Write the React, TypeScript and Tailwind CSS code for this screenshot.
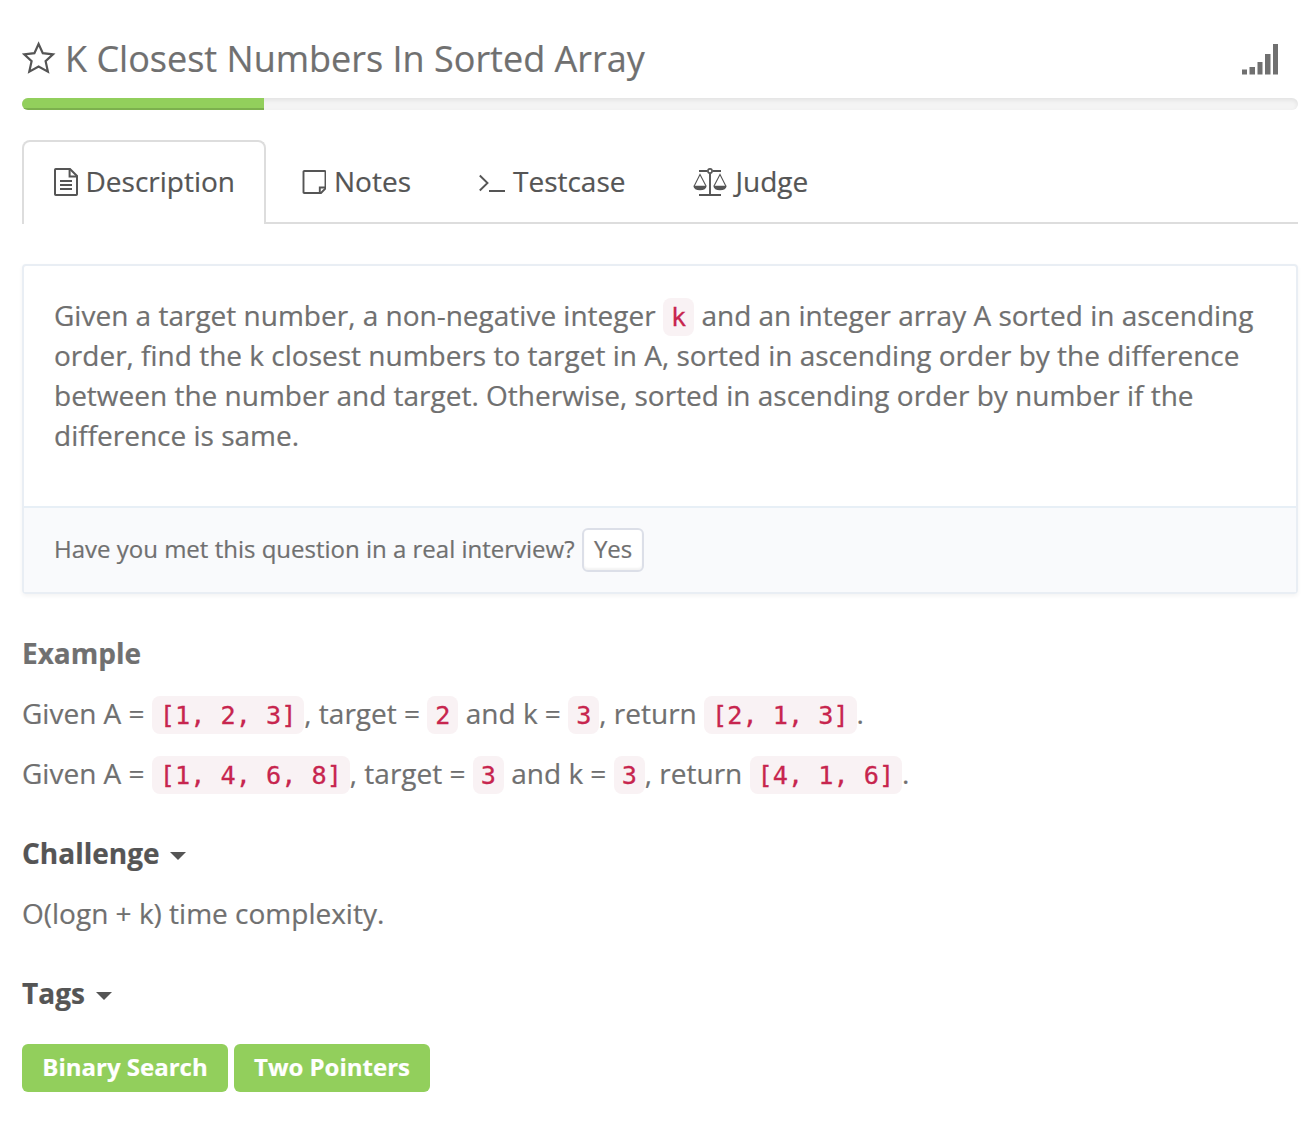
import type { ReactNode } from "react";

function Code({ children }: { children: ReactNode }) {
  return (
    <code className="rounded-lg bg-[#f9f2f4] px-2 pb-1 pt-[5px] font-['DejaVu_Sans_Mono',monospace] text-[25.2px] leading-[30px] text-[#c7254e] [-webkit-text-stroke:0.3px_#c7254e]">
      {children}
    </code>
  );
}

function StarIcon() {
  return (
    <svg className="-mt-[5px] h-[34px] w-[34px] shrink-0" viewBox="0 0 34 34" fill="none" stroke="#555" strokeWidth="2.2">
      <path d="M16.6 4 L20.8 13.2 L31 14.4 L23.6 21.2 L25.9 31.6 L16.6 26.6 L7.3 31.6 L9.6 21.2 L2.2 14.4 L12.4 13.2 Z" />
    </svg>
  );
}

function SignalIcon() {
  return (
    <svg className="h-8 w-9" viewBox="0 0 36 32" fill="#707070">
      <path d="M0 26.5h5v5h-5zM7.5 24h5.5v7.5h-5.5zM15.5 19h5v12.5h-5zM23 11h5.5v20.5h-5.5zM31 1h5v30.5h-5z" />
    </svg>
  );
}

function DocumentIcon() {
  return (
    <svg className="mt-0.5 h-7 w-6" viewBox="0 0 24 28" fill="none" stroke="#555" strokeWidth="2">
      <path d="M16 1H1.8Q1 1 1 1.8V26.2Q1 27 1.8 27H22.2Q23 27 23 26.2V8Z" />
      <path d="M15.6 1V8.6H23" />
      <path d="M6 13h12M6 17h12M6 21h12" strokeWidth="1.8" />
    </svg>
  );
}

function NoteIcon() {
  return (
    <svg className="mt-0.5 h-7 w-6" viewBox="0 0 24 28" fill="none" stroke="#555" strokeWidth="1.9">
      <path d="M2.3 3H22.7Q23.5 3 23.5 3.8V20.5L19 25H2.3Q1.5 25 1.5 24.2V3.8Q1.5 3 2.3 3Z" />
      <path d="M17.8 25V19.5H23.5" />
    </svg>
  );
}

function TerminalIcon() {
  return (
    <svg className="h-7 w-[26px]" viewBox="0 0 26 28" fill="none" stroke="#555" strokeWidth="1.9">
      <path d="M.8 8.5L8.5 16L.8 23.5M10 24H26" />
    </svg>
  );
}

function ScaleIcon() {
  return (
    <svg className="-ml-px mr-px mt-0.5 h-7 w-[34px]" viewBox="0 0 34 28" fill="none" stroke="#555" strokeWidth="1.9">
      <path d="M6 3H14.5M19.5 3H28M17 5.5V27M6 27H28" />
      <circle cx="17" cy="3" r="2.1" strokeWidth="1.6" />
      <path d="M1.2 18L7 6.5L13 18M21 18L27 6.5L32.8 18" strokeWidth="1.1" />
      <path d="M.3 17.8H13.7Q13 22.3 7 22.3T.3 17.8ZM20.3 17.8H33.7Q33 22.3 27 22.3T20.3 17.8Z" fill="#555" stroke="none" />
    </svg>
  );
}

function Tab({ icon, label, active = false }: { icon: ReactNode; label: string; active?: boolean }) {
  return (
    <button
      className={
        active
          ? "-mb-0.5 mr-1 flex h-[84px] w-[244px] items-center gap-[7.5px] whitespace-nowrap rounded-t-lg border-2 border-b-0 border-[#ddd] bg-white pb-1 pl-[30px]"
          : "mr-1 flex h-[82px] items-center gap-[8px] border-2 border-b-0 border-transparent px-[30px] pb-0.5"
      }
    >
      {icon}
      <span className="leading-10">{label}</span>
    </button>
  );
}

function Caret() {
  return <span className="mt-[5px] border-x-8 border-t-8 border-x-transparent border-t-[#555]" />;
}

export default function App() {
  return (
    <main className="h-[1124px] w-[1316px] overflow-hidden bg-white px-[22px] pr-[18px] pt-[34px] font-['Open_Sans',sans-serif] text-[28px] leading-10 text-[#707070] [-webkit-text-stroke:0.2px_currentColor]">
      <header className="flex h-[50px] items-center">
        <StarIcon />
        <h1 className="ml-[9px] text-[36px] leading-[50px]">K Closest Numbers In Sorted Array</h1>
        <div className="ml-auto mr-5">
          <SignalIcon />
        </div>
      </header>

      <div className="mt-[14px] h-3 overflow-hidden rounded-md bg-[#f4f4f4] shadow-[inset_0_2px_4px_rgba(0,0,0,0.08)]">
        <div className="h-full w-[242px] bg-[#92cf5c] shadow-[inset_0_-2px_0_rgba(0,0,0,0.15)]" />
      </div>

      <nav className="mt-[30px] flex h-[84px] border-b-2 border-[#ddd] text-[#555]">
        <Tab active icon={<DocumentIcon />} label="Description" />
        <Tab icon={<NoteIcon />} label="Notes" />
        <Tab icon={<TerminalIcon />} label="Testcase" />
        <Tab icon={<ScaleIcon />} label="Judge" />
      </nav>

      <section className="mt-10 h-[330px] rounded-sm border-2 border-[#e9eef4] shadow-[0_2px_4px_rgba(0,0,0,0.05)]">
        <p className="h-[240px] whitespace-nowrap px-[30px] pt-[29px]">
          Given a target number, a non-negative integer <Code>k</Code> and an integer array A sorted in ascending
          <br />
          order, find the k closest numbers to target in A, sorted in ascending order by the difference
          <br />
          between the number and target. Otherwise, sorted in ascending order by number if the
          <br />
          difference is same.
        </p>
        <div className="flex h-[86px] items-center border-t-2 border-[#e7eff6] bg-[#f9fafc] px-[30px] text-[24px]">
          <span className="pb-0.5">Have you met this question in a real interview?</span>
          <button className="ml-[7px] h-11 w-[62px] rounded-md border-2 border-[#dcdfe8] bg-white pb-0.5 pl-px leading-[38px] shadow-[inset_0_-2px_2px_rgba(0,0,0,0.05)]">
            Yes
          </button>
        </div>
      </section>

      <h2 className="mt-[39px] font-bold">Example</h2>
      <p className="mt-5">
        Given A = <Code>[1, 2, 3]</Code>, target = <Code>2</Code> and k = <Code>3</Code>, return{" "}
        <Code>[2, 1, 3]</Code>.
      </p>
      <p className="mt-5">
        Given A = <Code>[1, 4, 6, 8]</Code>, target = <Code>3</Code> and k = <Code>3</Code>, return{" "}
        <Code>[4, 1, 6]</Code>.
      </p>

      <h2 className="mt-10 flex items-center gap-2.5 font-bold text-[#555]">
        Challenge <Caret />
      </h2>
      <p className="mt-5">O(logn + k) time complexity.</p>

      <h2 className="mt-10 flex items-center gap-[11px] font-bold text-[#555]">
        Tags <Caret />
      </h2>
      <div className="mt-[31px] flex gap-1.5 text-[24px] font-bold text-white">
        <span className="h-12 w-[206px] rounded-md bg-[#92cf5c] text-center leading-[46px]">Binary Search</span>
        <span className="h-12 w-[196px] rounded-md bg-[#92cf5c] text-center leading-[46px]">Two Pointers</span>
      </div>
    </main>
  );
}
